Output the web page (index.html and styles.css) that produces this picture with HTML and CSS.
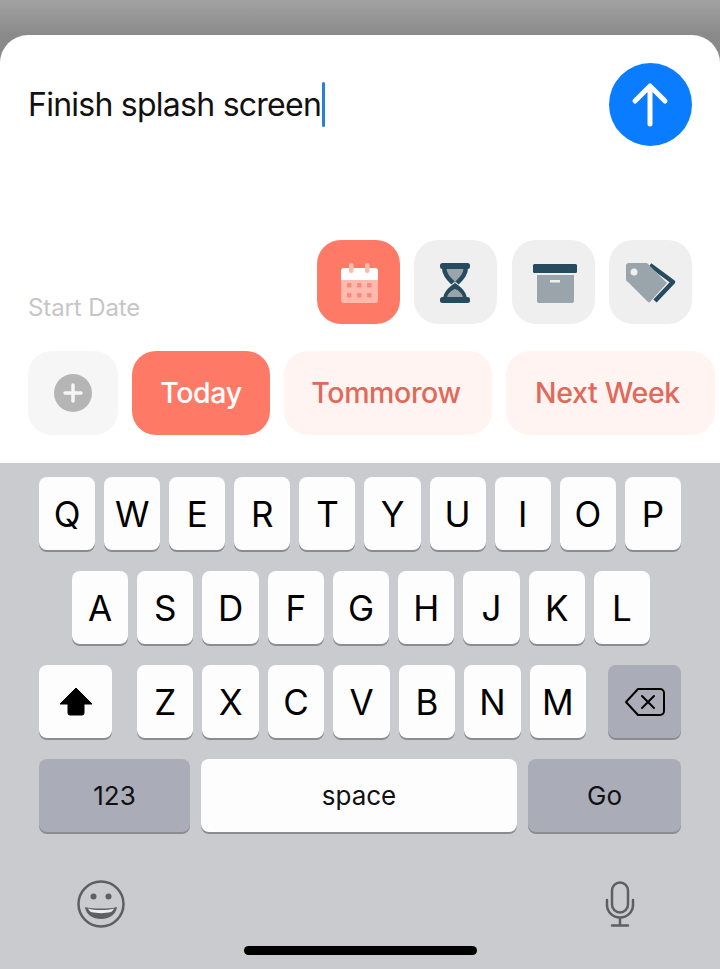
FILE: index.html
```html
<!DOCTYPE html>
<html lang="en">
  <head>
    <meta charset="UTF-8" />
    <title>New Task</title>
    <link rel="stylesheet" href="styles.css">
  </head>
  <body>
    <div class="screen">
      <div class="sheet">
        <div class="title-row">
          <div class="title">Finish splash screen<span class="caret"></span></div>
          <button class="send">
            <svg width="83" height="83" viewBox="0 0 83 83">
              <path d="M41 61V23M26 38L41 23L56 38" fill="none" stroke="#fff" stroke-width="5" stroke-linecap="round" stroke-linejoin="round" />
            </svg>
          </button>
        </div>

        <div class="option-row">
          <span class="option-label">Start Date</span>
          <div class="options">
            <div class="tile tile-active">
              <svg width="83" height="84" viewBox="0 0 83 84">
                <path d="M24 40H61V60a3 3 0 0 1-3 3H27a3 3 0 0 1-3-3Z" fill="#ffb9ad" />
                <path d="M27 28H58a3 3 0 0 1 3 3V40H24V31a3 3 0 0 1 3-3Z" fill="#fff" />
                <rect x="32" y="23" width="4.500" height="10" rx="2" fill="#ffb9ad" />
                <rect x="48" y="23" width="4.500" height="10" rx="2" fill="#ffb9ad" />
                <g fill="#f58c7c">
                  <rect x="30" y="43" width="4.500" height="4.500" rx="1" />
                  <rect x="40" y="43" width="4.500" height="4.500" rx="1" />
                  <rect x="50" y="43" width="4.500" height="4.500" rx="1" />
                  <rect x="30" y="53" width="4.500" height="4.500" rx="1" />
                  <rect x="40" y="53" width="4.500" height="4.500" rx="1" />
                  <rect x="50" y="53" width="4.500" height="4.500" rx="1" />
                </g>
              </svg>
            </div>
            <div class="tile">
              <svg width="83" height="84" viewBox="0 0 83 84">
                <path d="M30 26H52C52 35 47 39 41 43C35 39 30 35 30 26Z" fill="#9aa5ab" />
                <path d="M41 43C35 47 29 52 29 60H53C53 52 47 47 41 43Z" fill="#264a5e" />
                <path d="M41 49C36 51 33 55 33 58H49C49 55 46 51 41 49Z" fill="#9aa5ab" />
                <path d="M30 26C30 35 35 39 39 43M52 26C52 35 47 39 43 43" fill="none" stroke="#264a5e" stroke-width="4.500" />
                <rect x="26" y="23" width="30" height="6" rx="2.500" fill="#264a5e" />
                <rect x="26" y="57" width="30" height="6" rx="2.500" fill="#264a5e" />
              </svg>
            </div>
            <div class="tile">
              <svg width="83" height="84" viewBox="0 0 83 84">
                <rect x="21" y="24" width="44" height="9" rx="1.500" fill="#264a5e" />
                <path d="M25 35H62V61a2 2 0 0 1-2 2H27a2 2 0 0 1-2-2Z" fill="#9aa5ab" />
                <rect x="38" y="40" width="10" height="2.500" fill="#efefef" />
              </svg>
            </div>
            <div class="tile">
              <svg width="83" height="84" viewBox="0 0 83 84">
                <path d="M41 25L64 42L46 61" fill="none" stroke="#264a5e" stroke-width="4.500" stroke-linejoin="round" />
                <path d="M20 23H38L58 43L41 62a1.500 1.500 0 0 1-2 0L19 42a3 3 0 0 1-2-3V26a3 3 0 0 1 3-3Z" fill="#9aa5ab" />
                <circle cx="25" cy="32" r="3.500" fill="#efefef" />
              </svg>
            </div>
          </div>
        </div>

        <div class="chip-row">
          <div class="chip chip-add">
            <svg width="38" height="38" viewBox="0 0 38 38">
              <circle cx="19" cy="19" r="19" fill="#b5b5b5" />
              <path d="M19 11V27M11 19H27" stroke="#f6f6f6" stroke-width="3.500" stroke-linecap="round" />
            </svg>
          </div>
          <div class="chip chip-today">Today</div>
          <div class="chip chip-tomorrow">Tommorow</div>
          <div class="chip chip-week">Next Week</div>
        </div>
      </div>

      <div class="keyboard">
        <div class="key-row">
          <div class="key">Q</div>
          <div class="key">W</div>
          <div class="key">E</div>
          <div class="key">R</div>
          <div class="key">T</div>
          <div class="key">Y</div>
          <div class="key">U</div>
          <div class="key">I</div>
          <div class="key">O</div>
          <div class="key">P</div>
        </div>
        <div class="key-row key-row-mid">
          <div class="key">A</div>
          <div class="key">S</div>
          <div class="key">D</div>
          <div class="key">F</div>
          <div class="key">G</div>
          <div class="key">H</div>
          <div class="key">J</div>
          <div class="key">K</div>
          <div class="key">L</div>
        </div>
        <div class="key-row key-row-shift">
          <div class="key key-wide">
            <svg width="34" height="30" viewBox="0 0 34 30">
              <path d="M17 1L33 17H25V26a2 2 0 0 1-2 2H11a2 2 0 0 1-2-2V17H1Z" fill="#000" stroke="#000" stroke-linejoin="round" />
            </svg>
          </div>
          <div class="letters">
            <div class="key">Z</div>
            <div class="key">X</div>
            <div class="key">C</div>
            <div class="key">V</div>
            <div class="key">B</div>
            <div class="key">N</div>
            <div class="key">M</div>
          </div>
          <div class="key key-wide key-dark">
            <svg width="42" height="30" viewBox="0 0 42 30">
              <path d="M14 2H36a4 4 0 0 1 4 4V24a4 4 0 0 1-4 4H14L2 15Z" fill="none" stroke="#000" stroke-width="2" stroke-linejoin="round" />
              <path d="M18 9L30 21M30 9L18 21" stroke="#000" stroke-width="2" stroke-linecap="round" />
            </svg>
          </div>
        </div>
        <div class="key-row key-row-bottom">
          <div class="key key-dark key-word key-num">123</div>
          <div class="key key-word key-space">space</div>
          <div class="key key-dark key-word key-go">Go</div>
        </div>

        <div class="kb-icons">
          <svg width="50" height="50" viewBox="0 0 50 50">
            <circle cx="25" cy="25" r="22.500" fill="none" stroke="#5d5f63" stroke-width="2.500" />
            <circle cx="17.500" cy="17.500" r="3" fill="#5d5f63" />
            <circle cx="32.500" cy="17.500" r="3" fill="#5d5f63" />
            <path d="M9 28C16 30 34 30 41 28C40 36 33 40 25 40C17 40 10 36 9 28Z" fill="#5d5f63" />
            <path d="M12 29.500C19 31.500 31 31.500 38 29.500C37 31.500 36 32.500 35 33C29 34.500 21 34.500 15 33C14 32.500 13 31.500 12 29.500Z" fill="#eceded" />
          </svg>
          <svg width="30" height="46" viewBox="0 0 30 46">
            <rect x="7" y="1.500" width="16" height="30" rx="8" fill="none" stroke="#5d5f63" stroke-width="2.500" />
            <path d="M2 19V24C2 31 8 36.500 15 36.500C22 36.500 28 31 28 24V19M15 36.500V44M7 44.500H23" fill="none" stroke="#5d5f63" stroke-width="2.500" stroke-linecap="round" />
          </svg>
        </div>
        <div class="home-bar"></div>
      </div>
    </div>
  </body>
</html>
```

FILE: styles.css
```css
* {
  box-sizing: border-box;
  margin: 0;
  padding: 0;
  font-family: "Inter", "Liberation Sans", sans-serif;
}

body {
  width: 720px;
  height: 969px;
  overflow: hidden;
}

.screen {
  height: 969px;
  padding-top: 35px;
  display: flex;
  flex-direction: column;
  background: linear-gradient(180deg, #a2a2a2, #8a8a8a 35px);
}

.sheet {
  height: 428px;
  padding: 28px 0 28px 28px;
  background: #fff;
  border-radius: 28px 28px 0 0;
  overflow: hidden;
}

.title-row {
  display: flex;
  justify-content: space-between;
  align-items: flex-start;
  height: 83px;
  padding-right: 28px;
}

.title {
  display: flex;
  align-items: center;
  height: 46px;
  margin-top: 18px;
  font-size: 32px;
  letter-spacing: -0.75px;
  color: #111;
}

.caret {
  width: 3px;
  height: 45px;
  margin-left: 1px;
  border-radius: 2px;
  background: #2a7fd6;
}

.send {
  width: 83px;
  height: 83px;
  border: none;
  border-radius: 50%;
  background: #0a7cff;
}

.send svg {
  display: block;
}

.option-row {
  display: flex;
  justify-content: space-between;
  align-items: flex-end;
  margin-top: 94px;
  padding-right: 28px;
}

.option-label {
  margin-bottom: 2px;
  font-size: 24px;
  letter-spacing: -0.1px;
  color: #c6c6c6;
}

.options {
  display: flex;
  gap: 14.33px;
}

.tile {
  width: 83px;
  height: 84px;
  border-radius: 24px;
  background: #efefef;
}

.tile svg {
  display: block;
}

.tile-active {
  background: #ff7a66;
}

.chip-row {
  display: flex;
  gap: 14px;
  margin-top: 27px;
}

.chip {
  flex: none;
  display: flex;
  justify-content: center;
  align-items: center;
  height: 84px;
  padding-bottom: 2px;
  border-radius: 24px;
  font-size: 28.5px;
  font-weight: 500;
  letter-spacing: -0.35px;
}

.chip-add {
  width: 90px;
  padding-bottom: 0;
  background: #f6f6f6;
}

.chip-today {
  width: 138px;
  background: #ff7a66;
  color: #fff;
}

.chip-tomorrow {
  width: 208px;
  padding-right: 4px;
  background: #fff4f2;
  color: #e0695a;
}

.chip-week {
  width: 209px;
  padding-right: 6px;
  background: #fff4f2;
  color: #e0695a;
}

.keyboard {
  flex: 1;
  padding: 14px 39px 0;
  background: #c9cbce;
}

.key-row {
  display: flex;
  gap: 9px;
  height: 73px;
  margin-bottom: 21px;
}

.key-row-mid {
  padding: 0 31px 0 33px;
}

.key-row-shift {
  gap: 0;
}

.letters {
  display: flex;
  gap: 9px;
  width: 449px;
  margin: 0 22px 0 25px;
}

.key {
  flex: 1;
  display: flex;
  justify-content: center;
  align-items: center;
  border-radius: 8px;
  background: #fdfdfe;
  box-shadow: 0 2px 0 #8b8c90;
  font-size: 35px;
  color: #000;
}

.key-wide {
  flex: none;
  width: 73px;
}

.key-dark {
  background: #aaadb8;
}

.key-word {
  flex: none;
  font-size: 26px;
  color: #111;
}

.key-row-bottom {
  gap: 11px;
  margin-bottom: 0;
}

.key-num {
  width: 151px;
}

.key-space {
  width: 316px;
}

.key-go {
  width: 153px;
}

.kb-icons {
  display: flex;
  justify-content: space-between;
  align-items: center;
  height: 50px;
  margin-top: 47px;
  padding: 0 46px 0 37px;
}

.home-bar {
  width: 233px;
  height: 9px;
  margin: 17px auto 0;
  border-radius: 5px;
  background: #000;
}
```
